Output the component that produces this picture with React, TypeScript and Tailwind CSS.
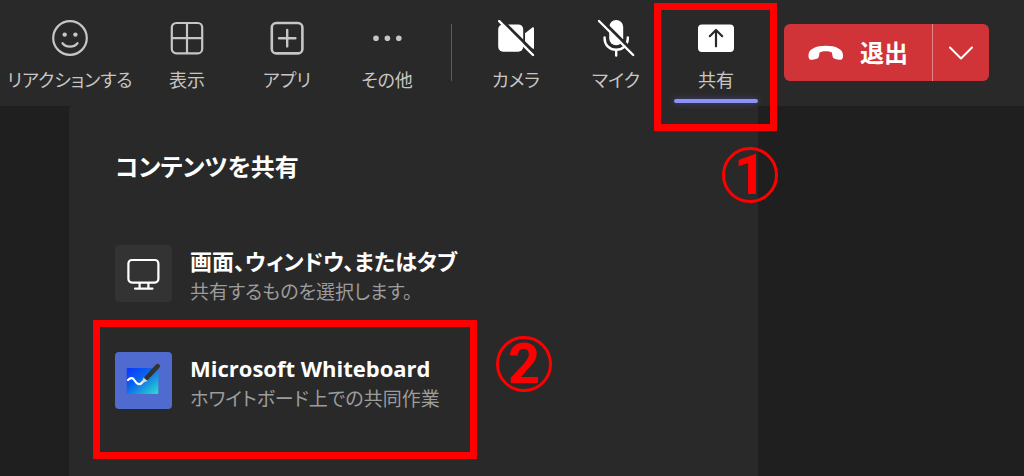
import type { ReactNode } from "react";

function ToolbarButton({
  label,
  wide = false,
  active = false,
  children,
}: {
  label: string;
  wide?: boolean;
  active?: boolean;
  children: ReactNode;
}) {
  return (
    <button
      type="button"
      className={`relative flex shrink-0 flex-col items-center pt-5 ${wide ? "w-[134px]" : "w-[100px]"}`}
    >
      <svg viewBox="0 0 36 36" className="size-9 overflow-visible" fill="none" aria-hidden="true">
        {children}
      </svg>
      <span className="mt-2.5 text-lg leading-7 whitespace-nowrap">{label}</span>
      {active && (
        <span className="absolute inset-x-2 bottom-0.5 h-1 rounded-full bg-[#8f92f5] shadow-[0_0_6px_#5b5fc799]" />
      )}
    </button>
  );
}

function StepNumber({ value, className }: { value: number; className: string }) {
  return (
    <span
      className={`pointer-events-none absolute flex size-14 items-center justify-center rounded-full border-[3px] border-[#ff0000] font-['Roboto',sans-serif] text-[56px] leading-none font-bold text-[#ff0000] ${className}`}
    >
      {value}
    </span>
  );
}

function ShareOption({
  title,
  description,
  icon,
  tile,
  children,
}: {
  title: string;
  description: string;
  icon: ReactNode;
  tile: string;
  children?: ReactNode;
}) {
  return (
    <li className="relative">
      <button type="button" className="flex items-start gap-[18px] text-left">
        <span className={`size-[57px] shrink-0 rounded ${tile}`}>
          <svg viewBox="0 0 57 57" className="size-full" fill="none" aria-hidden="true">
            {icon}
          </svg>
        </span>
        <span className="flex flex-col">
          <span className="text-[22px] leading-8 font-bold text-white">{title}</span>
          <span className="text-[19px] leading-[30px] text-[#9c9c9c]">{description}</span>
        </span>
      </button>
      {children}
    </li>
  );
}

export default function App() {
  return (
    <div className="flex min-h-screen flex-col overflow-hidden bg-[#1f1f1f] font-['Open_Sans','Noto_Sans_CJK_JP',sans-serif] [font-feature-settings:'palt']">
      <header className="flex h-[106px] items-start justify-end bg-[#292929] pr-[35px] text-[#c8c6c4]">
        <ToolbarButton label="リアクションする" wide>
          <circle cx="18" cy="18" r="16.8" stroke="currentColor" strokeWidth="2.2" />
          <circle cx="12.7" cy="14.6" r="2.2" fill="currentColor" />
          <circle cx="23.4" cy="14.6" r="2.2" fill="currentColor" />
          <path d="M10.5 23.2c3.7 4.6 11.3 4.6 15 0" stroke="currentColor" strokeWidth="2.2" strokeLinecap="round" />
        </ToolbarButton>
        <ToolbarButton label="表示">
          <rect x="2.8" y="3" width="30.4" height="30.4" rx="4.5" stroke="currentColor" strokeWidth="2.2" />
          <path d="M18 3v30.4M2.8 18.2h30.4" stroke="currentColor" strokeWidth="2.2" />
        </ToolbarButton>
        <ToolbarButton label="アプリ">
          <rect x="2.8" y="3" width="30.6" height="30.4" rx="4.5" stroke="currentColor" strokeWidth="2.6" />
          <path d="M18.2 10v16.4M10 18.2h16.4" stroke="currentColor" strokeWidth="2.4" strokeLinecap="round" />
        </ToolbarButton>
        <ToolbarButton label="その他">
          <g fill="currentColor">
            <circle cx="7" cy="18.2" r="2.8" />
            <circle cx="18.4" cy="18.2" r="2.8" />
            <circle cx="29.8" cy="18.2" r="2.8" />
          </g>
        </ToolbarButton>
        <span className="mx-3.5 mt-6 h-[57px] w-px shrink-0 bg-[#5c5c5c]" />
        <ToolbarButton label="カメラ">
          <rect x="0.2" y="4.4" width="25" height="27.4" rx="5" fill="#fff" />
          <path d="M27 13.2l7.4-5.6c.8-.6 1.6-.2 1.6.7v19.6c0 .9-.8 1.3-1.6.7L27 23z" fill="#fff" />
          <path d="M3.2-.4L37.8 34" stroke="#292929" strokeWidth="3" />
          <path d="M1.2 1.2L35 35" stroke="#fff" strokeWidth="2.4" strokeLinecap="round" />
        </ToolbarButton>
        <ToolbarButton label="マイク">
          <rect x="11.2" y="0" width="14" height="25.2" rx="7" fill="#fff" />
          <path d="M6.6 17.4v1c0 6.600 5 11.300 11.600 11.300s11.600-4.700 11.600-11.300v-1M18.200 30v5.500" stroke="#fff" strokeWidth="2.4" strokeLinecap="round" />
          <path d="M3.2-.4L37.8 34" stroke="#292929" strokeWidth="3" />
          <path d="M1 1L35.2 35" stroke="#fff" strokeWidth="2.4" strokeLinecap="round" />
        </ToolbarButton>
        <div className="relative shrink-0">
          <div className="flex h-[105px]">
            <ToolbarButton label="共有" active>
              <rect x="0" y="4.5" width="36" height="27.4" rx="4" fill="#fff" />
              <path d="M18 26.3V10.4M11.8 16.2L18 10l6.2 6.2" stroke="#292929" strokeWidth="2.2" strokeLinecap="round" strokeLinejoin="round" />
            </ToolbarButton>
          </div>
          <span className="pointer-events-none absolute top-[3px] -left-3 h-32 w-[123px] border-[7px] border-[#ff0000]" />
          <StepNumber value={1} className="top-[147px] left-14" />
        </div>
        <div className="mt-6 ml-[18px] flex h-[57px] shrink-0 overflow-hidden rounded-md bg-[#d13438] text-white">
          <button type="button" className="flex w-[148px] items-center justify-center gap-4 text-2xl font-bold">
            <svg viewBox="0 0 36 16" className="h-4 w-9" fill="currentColor" aria-hidden="true">
              <path d="M.5 10C.5 4 8 .7 17.8.7S35 4 35 10v1c0 3-1.5 4.2-4 3.8l-3.6-.7c-2-.4-2.6-1.5-2.9-3l-.6-3.7c-3-1.5-9.2-1.5-12.3 0l-.6 3.700c-.3 1.500-.9 2.600-2.900 3l-3.600.7C2 15.200.5 14 .5 11z" />
            </svg>
            退出
          </button>
          <button
            type="button"
            aria-label="その他"
            className="flex w-[57px] items-center justify-center border-l border-[#e3868a]"
          >
            <svg viewBox="0 0 24 14" className="h-3.5 w-6" fill="none" aria-hidden="true">
              <path d="M1 1.5l11 11 11-11" stroke="currentColor" strokeWidth="2" strokeLinecap="round" strokeLinejoin="round" />
            </svg>
          </button>
        </div>
      </header>

      <main className="mr-[266px] ml-[69px] flex-1 rounded-tl bg-[#292929] px-[46px] pt-[43px] pb-10">
        <h1 className="text-2xl leading-9 font-bold text-white">コンテンツを共有</h1>
        <ul className="mt-[60px] flex flex-col gap-[45px]">
          <ShareOption
            title="画面、ウィンドウ、またはタブ"
            description="共有するものを選択します。"
            tile="bg-[#333333]"
            icon={
              <g stroke="#fff" strokeWidth="2.2" strokeLinecap="round">
                <rect x="13.4" y="15" width="30" height="22.6" rx="3.5" />
                <path d="M24.6 38v5.5M33.4 38v5.5M20 43.6h17.5" />
              </g>
            }
          />
          <ShareOption
            title="Microsoft Whiteboard"
            description="ホワイトボード上での共同作業"
            tile="bg-[#4f6bd0]"
            icon={
              <>
                <defs>
                  <linearGradient id="board" x1="0" y1="0" x2="1" y2="1">
                    <stop offset="0" stopColor="#0a35ff" />
                    <stop offset="0.4" stopColor="#0a62ee" />
                    <stop offset="1" stopColor="#2de0cc" />
                  </linearGradient>
                </defs>
                <rect x="11.7" y="16" width="31.6" height="26" rx="1" fill="url(#board)" />
                <path d="M13 28c3-3 5-2 6.6.5 2.4 4 5.4 5.2 8.4 1" stroke="#fff" strokeWidth="2.2" strokeLinecap="round" />
                <path d="M31.5 26L42.7 14.200" stroke="#333" strokeWidth="4.600" strokeLinecap="round" />
                <path d="M27 31l1.500-5.600 4 3.700z" fill="#d8d8d8" />
              </>
            }
          >
            <span className="pointer-events-none absolute -top-8 -left-[22px] h-[139px] w-96 border-[7px] border-[#ff0000]" />
            <StepNumber value={2} className="-top-4 left-[381px]" />
          </ShareOption>
        </ul>
      </main>
    </div>
  );
}
